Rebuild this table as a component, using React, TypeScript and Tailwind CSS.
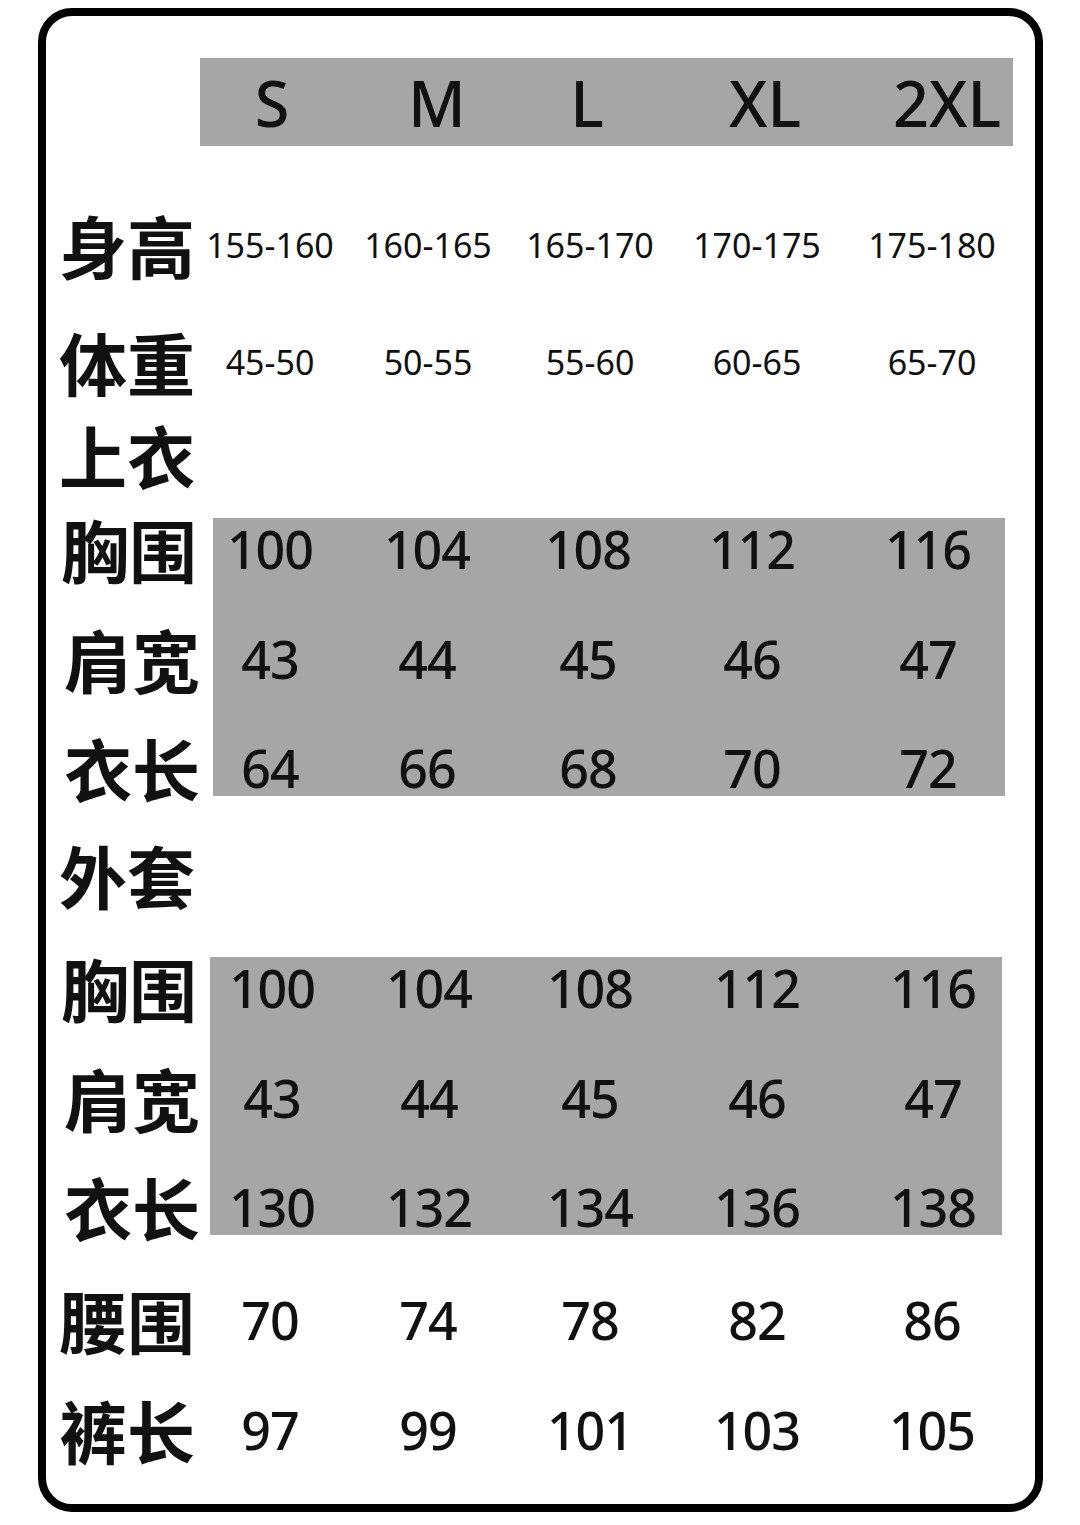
import React from 'react';

const num = "font-['Noto_Sans',sans-serif] text-[#111] leading-none";
const cjk = "font-['Noto_Sans_CJK_SC',sans-serif] font-bold text-[#111] leading-none text-[68px] whitespace-nowrap";

const rowCols = 'grid grid-cols-[149px_150px_166px_158px_176px_174px] items-center';

function Row({ label, values, small, className }: { label: string; values: string[]; small?: boolean; className: string }) {
  return (
    <div className={`${rowCols} h-[80px] ${className}`}>
      <div className={`${cjk} pl-[13px]`}>{label}</div>
      {values.map((v) => (
        <div key={v} className={`${num} text-center ${small ? 'text-[34px]' : 'text-[52px] font-medium tracking-[-1px]'}`}>
          {v}
        </div>
      ))}
    </div>
  );
}

function Section({
  labels,
  rows,
  labelWidth,
  cols,
  className,
}: {
  labels: string[];
  rows: string[][];
  labelWidth: string;
  cols: string;
  className: string;
}) {
  return (
    <div className={`flex ${className}`}>
      <div className={`${labelWidth} h-[278px] flex flex-col justify-between pt-[3px]`}>
        {labels.map((l, i) => (
          <div key={i} className={`h-[56px] flex items-center ${cjk} ${i === 0 ? 'pl-[15px]' : 'pl-[18px]'}`}>
            {l}
          </div>
        ))}
      </div>
      <div className="w-[792px] h-[278px] bg-[#a6a6a6] flex flex-col justify-between pt-[3px]">
        {rows.map((r, i) => (
          <div key={i} className={`${cols} h-[56px] items-center`}>
            {r.map((v, j) => (
              <div key={j} className={`${num} text-[52px] font-medium tracking-[-1px] text-center`}>
                {v}
              </div>
            ))}
          </div>
        ))}
      </div>
    </div>
  );
}

export default function App() {
  const sizes = ['S', 'M', 'L', 'XL', '2XL'];
  return (
    <div className="w-[1080px] h-[1525px] bg-white pt-[8px] pl-[38px]">
      <div className="w-[1005px] h-[1504px] border-[8px] border-black rounded-[34px] flex flex-col">
        {/* header */}
        <div className="mt-[42px] ml-[154px] w-[813px] h-[88px] bg-[#a6a6a6] grid grid-cols-[144px_186px_114px_242px_122px] items-center">
          {sizes.map((s) => (
            <div key={s} className={`${num} text-[63px] font-medium text-center`}>
              {s}
            </div>
          ))}
        </div>

        <Row label="身高" small values={['155-160', '160-165', '165-170', '170-175', '175-180']} className="mt-[59px]" />
        <Row label="体重" small values={['45-50', '50-55', '55-60', '60-65', '65-70']} className="mt-[37px]" />
        <Row label="上衣" values={[]} className="mt-[13px]" />

        <Section
          className="mt-[23px]"
          labelWidth="w-[167px]"
          cols="grid grid-cols-[114px_200px_122px_206px_146px]"
          labels={['胸围', '肩宽', '衣长']}
          rows={[
            ['100', '104', '108', '112', '116'],
            ['43', '44', '45', '46', '47'],
            ['64', '66', '68', '70', '72'],
          ]}
        />

        <Row label="外套" values={[]} className="mt-[39px]" />

        <Section
          className="mt-[42px]"
          labelWidth="w-[164px]"
          cols="grid grid-cols-[124px_190px_132px_202px_150px]"
          labels={['胸围', '肩宽', '衣长']}
          rows={[
            ['100', '104', '108', '112', '116'],
            ['43', '44', '45', '46', '47'],
            ['130', '132', '134', '136', '138'],
          ]}
        />

        <Row label="腰围" values={['70', '74', '78', '82', '86']} className="mt-[45px]" />
        <Row label="裤长" values={['97', '99', '101', '103', '105']} className="mt-[30px]" />
      </div>
    </div>
  );
}
